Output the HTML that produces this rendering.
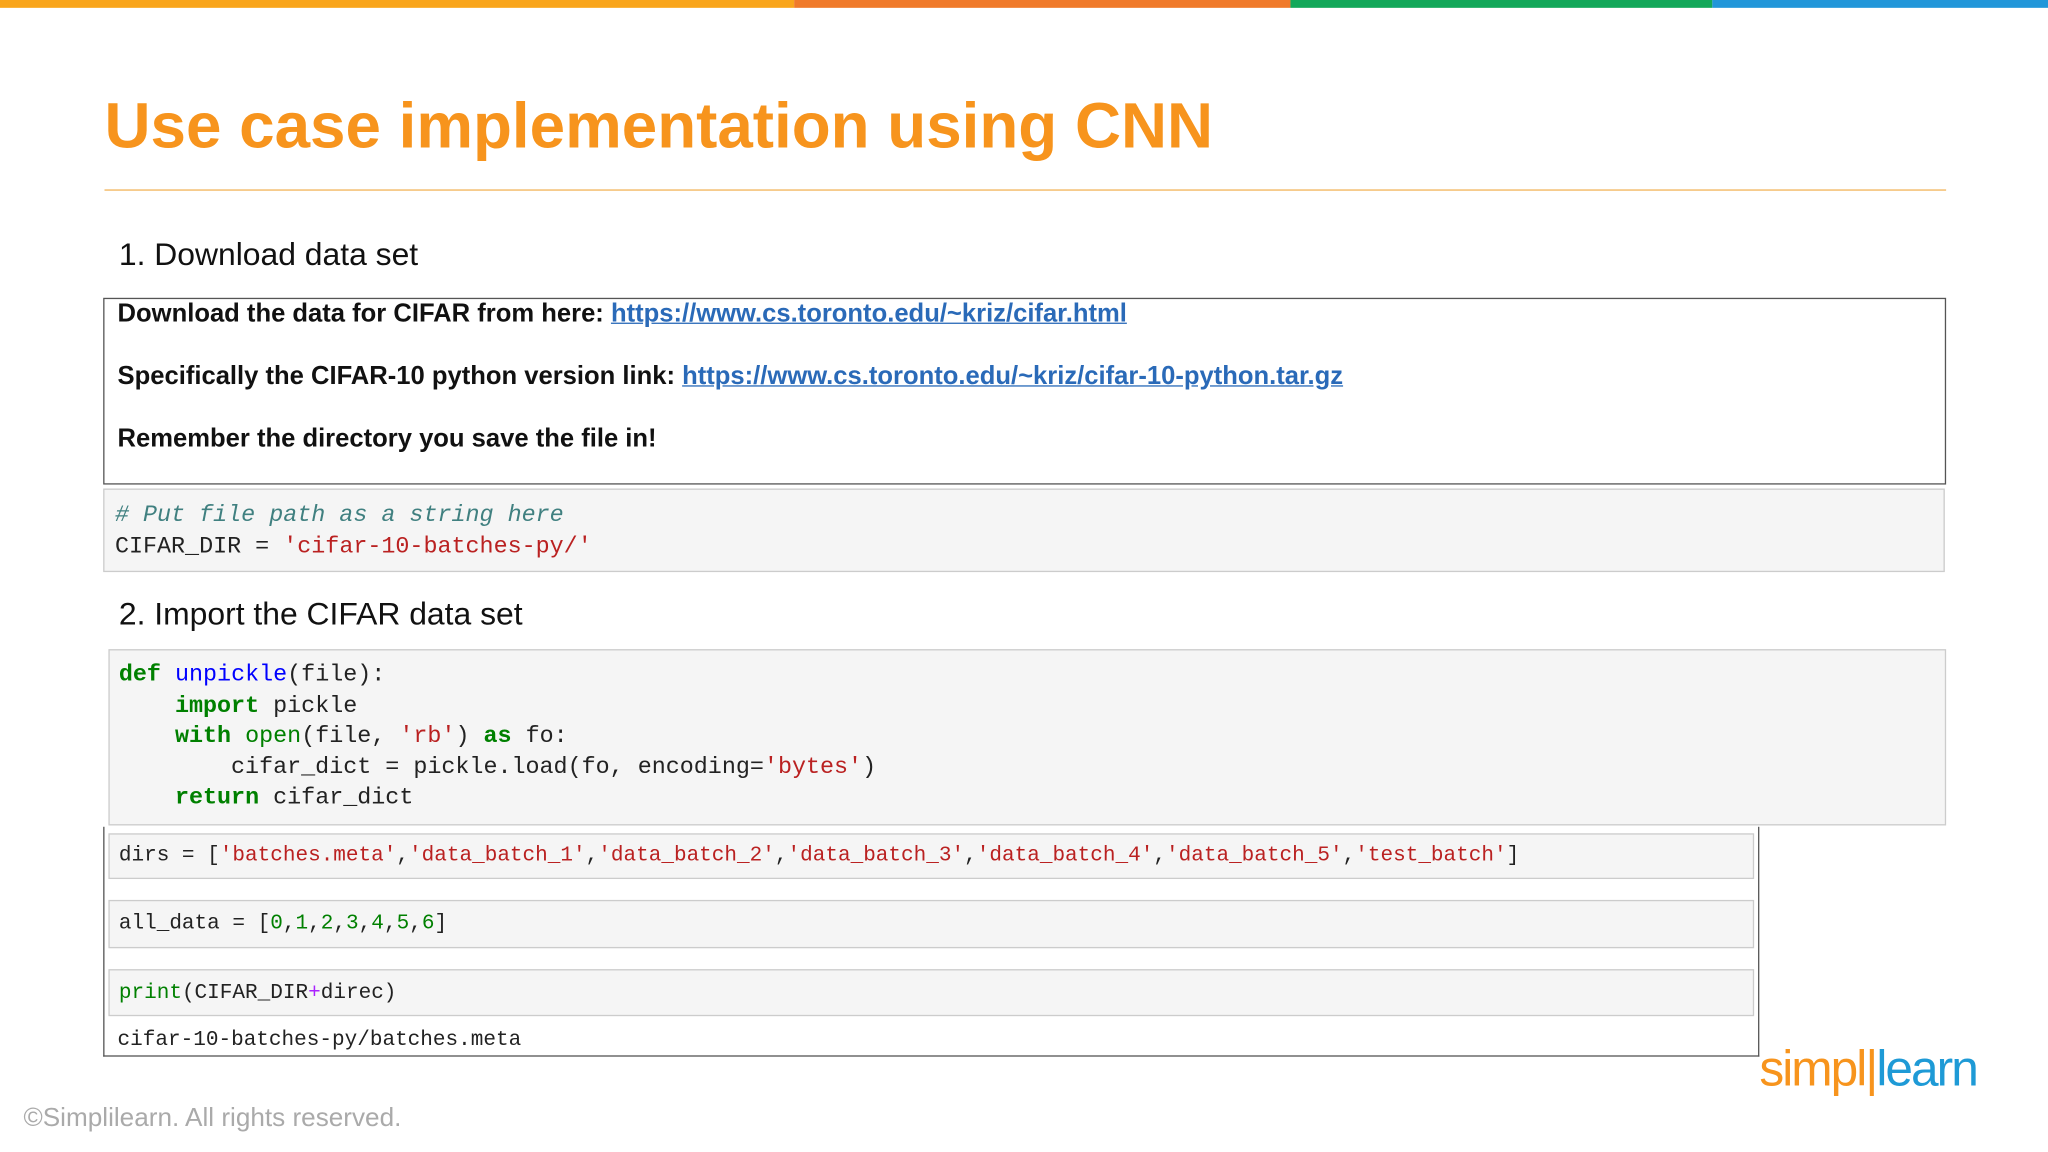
<!DOCTYPE html>
<html><head><meta charset="utf-8"><style>
html,body{margin:0;padding:0;background:#fff;width:2048px;height:1152px;overflow:hidden}
#s{position:absolute;left:0;top:0;width:1568px;height:882px;transform:scale(1.306122);transform-origin:0 0;font-family:"Liberation Sans",sans-serif}
.a{position:absolute}
.mono{font-family:"Liberation Mono",monospace;font-size:16.1px;color:#222;white-space:pre}
.big{font-size:17.9px}
.k{color:#008000;font-weight:bold}.f{color:#0000ff}.s{color:#ba2121}.n{color:#008000}.c{color:#408080;font-style:italic}.b{color:#008000}.o{color:#aa22ff}
.t{font-size:19.6px;font-weight:bold;color:#111}
.t a{color:#2a6ab8;text-decoration:underline}
</style></head><body><div id="s">
<div class="a" style="left:0;top:0;width:608px;height:6px;background:#f9a51b"></div>
<div class="a" style="left:608px;top:0;width:380px;height:6px;background:#f07a2a"></div>
<div class="a" style="left:988px;top:0;width:323px;height:6px;background:#13a85a"></div>
<div class="a" style="left:1311px;top:0;width:257px;height:6px;background:#2196d9"></div>
<div class="a" style="left:80px;top:69px;font-size:48.8px;font-weight:bold;color:#f7941d">Use case implementation using CNN</div>
<div class="a" style="left:80px;top:145px;width:1410px;height:1px;background:#f2b45a"></div>
<div class="a" style="left:91px;top:182px;font-size:24.4px;color:#111">1. Download data set</div>
<div class="a" style="left:79px;top:228px;width:1409px;height:141px;border:1px solid #555;background:#fff"></div>
<div class="a t" style="left:90px;top:229px">Download the data for CIFAR from here: <a>https://www.cs.toronto.edu/~kriz/cifar.html</a></div>
<div class="a t" style="left:90px;top:277px">Specifically the CIFAR-10 python version link: <a>https://www.cs.toronto.edu/~kriz/cifar-10-python.tar.gz</a></div>
<div class="a t" style="left:90px;top:325px">Remember the directory you save the file in!</div>
<div class="a" style="left:79px;top:374px;width:1408px;height:62px;border:1px solid #ccc;background:#f5f5f5"></div>
<div class="a mono big" style="left:88px;top:383px;line-height:24px"><span class="c"># Put file path as a string here</span>
CIFAR_DIR = <span class="s">'cifar-10-batches-py/'</span></div>
<div class="a" style="left:91px;top:457px;font-size:24.4px;color:#111">2. Import the CIFAR data set</div>
<div class="a" style="left:83px;top:497px;width:1405px;height:133px;border:1px solid #ccc;background:#f5f5f5"></div>
<div class="a mono big" style="left:91px;top:506px;line-height:23.5px"><span class="k">def</span> <span class="f">unpickle</span>(file):
    <span class="k">import</span> pickle
    <span class="k">with</span> <span class="b">open</span>(file, <span class="s">'rb'</span>) <span class="k">as</span> fo:
        cifar_dict = pickle.load(fo, encoding=<span class="s">'bytes'</span>)
    <span class="k">return</span> cifar_dict</div>
<div class="a" style="left:79px;top:633px;width:1266px;height:175px;border:1px solid #555;border-top:none;background:#fff"></div>
<div class="a" style="left:83px;top:638px;width:1258px;height:33px;border:1px solid #ccc;background:#f5f5f5"></div>
<div class="a mono" style="left:91px;top:646px">dirs = [<span class="s">'batches.meta'</span>,<span class="s">'data_batch_1'</span>,<span class="s">'data_batch_2'</span>,<span class="s">'data_batch_3'</span>,<span class="s">'data_batch_4'</span>,<span class="s">'data_batch_5'</span>,<span class="s">'test_batch'</span>]</div>
<div class="a" style="left:83px;top:689px;width:1258px;height:35px;border:1px solid #ccc;background:#f5f5f5"></div>
<div class="a mono" style="left:91px;top:698px">all_data = [<span class="n">0</span>,<span class="n">1</span>,<span class="n">2</span>,<span class="n">3</span>,<span class="n">4</span>,<span class="n">5</span>,<span class="n">6</span>]</div>
<div class="a" style="left:83px;top:742px;width:1258px;height:34px;border:1px solid #ccc;background:#f5f5f5"></div>
<div class="a mono" style="left:91px;top:751px"><span class="b">print</span>(CIFAR_DIR<span class="o">+</span>direc)</div>
<div class="a mono" style="left:90px;top:787px">cifar-10-batches-py/batches.meta</div>
<div class="a" style="left:18px;top:845px;font-size:20px;color:#aaa">©Simplilearn. All rights reserved.</div>
<div class="a" style="left:1347px;top:798px;font-size:38px;letter-spacing:-1.5px"><span style="color:#f7941d">simpl</span><span style="color:#f7941d">|</span><span style="color:#1e9ad6">learn</span></div>
</div></body></html>
